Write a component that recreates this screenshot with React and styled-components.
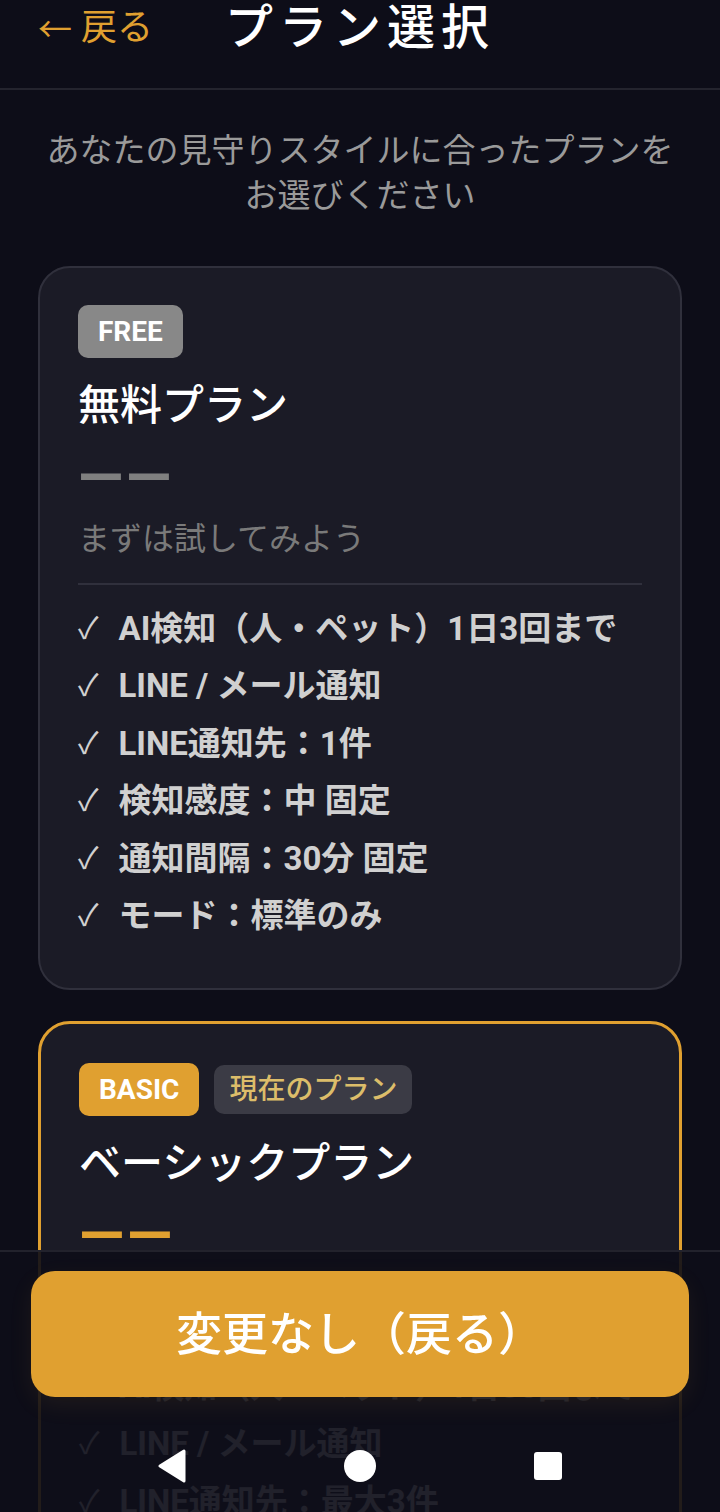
import React from "react";
import styled, { createGlobalStyle } from "styled-components";

const GlobalStyle = createGlobalStyle`
  html, body {
    margin: 0;
    padding: 0;
    background: #0d0d18;
  }
  body {
    font-family: Roboto, "Noto Sans CJK JP", sans-serif;
  }
  * {
    box-sizing: border-box;
  }
`;

const ORANGE = "#e0a030";

const Screen = styled.div`
  height: 1512px;
  overflow: hidden;
  background: #0d0d18;
  color: #fff;
`;

// ヘッダー
const Header = styled.header`
  display: grid;
  grid-template-columns: 1fr auto 1fr;
  align-items: start;
  height: 90px;
  padding: 0 38px;
  border-bottom: 2px solid #24242e;
`;

const BackLink = styled.button`
  justify-self: start;
  display: flex;
  align-items: center;
  gap: 9px;
  height: 56px;
  background: none;
  border: 0;
  padding: 0;
  color: ${ORANGE};
  font: 400 36px/56px Roboto, "Noto Sans CJK JP", sans-serif;
  cursor: pointer;
`;

const Arrow = styled.span`
  font-family: "Noto Sans CJK JP", sans-serif;
  font-size: 34px;
`;

const Title = styled.h1`
  margin: 0;
  font: 500 48px/56px Roboto, "Noto Sans CJK JP", sans-serif;
  letter-spacing: 6px;
  color: #fff;
`;

const Intro = styled.p`
  margin: 0;
  padding: 38px 30px 0;
  text-align: center;
  font: 400 33px/45px Roboto, "Noto Sans CJK JP", sans-serif;
  color: #9a9a9a;
`;

const PlanList = styled.div`
  display: flex;
  flex-direction: column;
  gap: 31px;
  padding: 48px 38px 300px;
`;

const Card = styled.section`
  background: #1b1b26;
  border: ${(p) => (p.$current ? `3px solid ${ORANGE}` : "2px solid #30303c")};
  border-radius: 32px;
  padding: ${(p) => (p.$current ? "39px 38px 43px" : "37px 38px 43px")};
`;

const BadgeRow = styled.div`
  display: flex;
  align-items: center;
  gap: 15px;
`;

const Badge = styled.span`
  height: 53px;
  padding: 0 20px;
  border-radius: 10px;
  background: ${(p) => p.$color};
  color: #fff;
  font: 700 28px/53px Roboto, "Noto Sans CJK JP", sans-serif;
`;

const CurrentTag = styled.span`
  height: 49px;
  padding: 0 15px;
  border-radius: 10px;
  background: #3b3b45;
  color: #dcbd6a;
  font: 500 28px/49px Roboto, "Noto Sans CJK JP", sans-serif;
`;

const PlanName = styled.h2`
  margin: 20px 0 0;
  font: 500 42px/56px Roboto, "Noto Sans CJK JP", sans-serif;
  color: #fff;
`;

const Price = styled.div`
  margin-top: 15px;
  font: 700 59px/56px Roboto, sans-serif;
  letter-spacing: 3px;
  color: ${(p) => p.$color};
`;

const Catch = styled.p`
  margin: 11px 0 0;
  font: 400 32px/46px Roboto, "Noto Sans CJK JP", sans-serif;
  color: #7a7a7a;
`;

const Divider = styled.div`
  height: 2px;
  margin-top: 21px;
  background: #30303c;
`;

const Features = styled.ul`
  display: flex;
  flex-direction: column;
  list-style: none;
  margin: 15px 0 0;
  padding: 0;
`;

const Feature = styled.li`
  display: flex;
  align-items: center;
  height: 57.5px;
  font: 700 33px/1.2 Roboto, "Noto Sans CJK JP", sans-serif;
  color: #d0d0d0;
  white-space: nowrap;
`;

const Check = styled.span`
  font-weight: 400;
  font-size: 30px;
  margin-right: 20px;
`;

// 下部固定バー
const Footer = styled.footer`
  position: fixed;
  left: 0;
  right: 0;
  bottom: 0;
  height: 262px;
  display: flex;
  flex-direction: column;
  padding: 19px 31px 0;
  background: rgba(13, 13, 24, 0.9);
  border-top: 2px solid #22222c;
`;

const MainButton = styled.button`
  height: 126px;
  border: 0;
  border-radius: 24px;
  background: ${ORANGE};
  color: #fff;
  font: 500 46px/1 Roboto, "Noto Sans CJK JP", sans-serif;
  box-shadow: 0 8px 24px rgba(224, 160, 48, 0.08);
  cursor: pointer;
`;

const NavBar = styled.nav`
  display: grid;
  grid-template-columns: repeat(3, 188px);
  justify-content: center;
  justify-items: center;
  align-items: center;
  height: 84px;
  margin-top: 27px;
`;

const plans = [
  {
    key: "free",
    badge: "FREE",
    badgeColor: "#888888",
    name: "無料プラン",
    priceColor: "#808080",
    catchCopy: "まずは試してみよう",
    features: [
      "AI検知（人・ペット）1日3回まで",
      "LINE / メール通知",
      "LINE通知先：1件",
      "検知感度：中 固定",
      "通知間隔：30分 固定",
      "モード：標準のみ",
    ],
  },
  {
    key: "basic",
    badge: "BASIC",
    badgeColor: ORANGE,
    name: "ベーシックプラン",
    priceColor: ORANGE,
    catchCopy: "毎日の見守りに",
    current: true,
    features: [
      "AI検知（人・ペット）1日30回まで",
      "LINE / メール通知",
      "LINE通知先：最大3件",
      "検知感度：3段階",
      "通知間隔：10分〜",
      "モード：標準・おでかけ",
    ],
  },
];

const App = () => {
  return (
    <Screen>
      <GlobalStyle />
      <Header>
        <BackLink>
          <Arrow>←</Arrow>戻る
        </BackLink>
        <Title>プラン選択</Title>
        <span />
      </Header>

      <Intro>
        あなたの見守りスタイルに合ったプランを
        <br />
        お選びください
      </Intro>

      <PlanList>
        {plans.map((plan) => (
          <Card key={plan.key} $current={plan.current}>
            <BadgeRow>
              <Badge $color={plan.badgeColor}>{plan.badge}</Badge>
              {plan.current && <CurrentTag>現在のプラン</CurrentTag>}
            </BadgeRow>
            <PlanName>{plan.name}</PlanName>
            <Price $color={plan.priceColor}>——</Price>
            <Catch>{plan.catchCopy}</Catch>
            <Divider />
            <Features>
              {plan.features.map((f) => (
                <Feature key={f}>
                  <Check>✓</Check>
                  {f}
                </Feature>
              ))}
            </Features>
          </Card>
        ))}
      </PlanList>

      <Footer>
        <MainButton>変更なし（戻る）</MainButton>
        <NavBar>
          <svg width="30" height="34" viewBox="0 0 30 34">
            <polygon points="27,2 27,32 3,17" fill="#fff" stroke="#fff" strokeWidth="3" strokeLinejoin="round" />
          </svg>
          <svg width="34" height="34" viewBox="0 0 34 34">
            <ellipse cx="17" cy="17" rx="16" ry="16" fill="#fff" />
          </svg>
          <svg width="30" height="30" viewBox="0 0 30 30">
            <rect x="1" y="1" width="28" height="28" rx="3" fill="#fff" />
          </svg>
        </NavBar>
      </Footer>
    </Screen>
  );
};

export default App;
